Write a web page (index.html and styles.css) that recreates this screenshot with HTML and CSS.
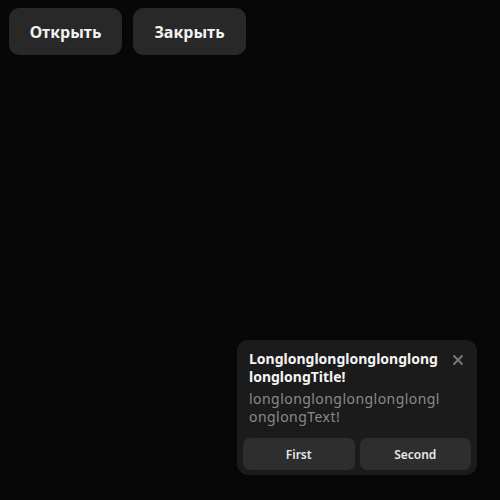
FILE: index.html
```html
<!DOCTYPE html>
<html>
<head>
<meta charset="utf-8">
<link rel="stylesheet" href="styles.css">
</head>
<body>
<div class="toolbar">
  <button class="btn">Открыть</button>
  <button class="btn">Закрыть</button>
</div>
<div class="toast">
  <div class="toast-head">
    <div class="toast-texts">
      <div class="toast-title">LonglonglonglonglonglonglonglongTitle!</div>
      <div class="toast-body">longlonglonglonglonglonglonglongText!</div>
    </div>
    <button class="close" aria-label="close">
      <svg width="12" height="12" viewBox="0 0 12 12"><path d="M2 2 L10 10 M10 2 L2 10" stroke="#7a7a7a" stroke-width="1.8" stroke-linecap="round"/></svg>
    </button>
  </div>
  <div class="toast-actions">
    <button class="act">First</button>
    <button class="act">Second</button>
  </div>
</div>
</body>
</html>
```
FILE: styles.css
```css
html, body {
  margin: 0;
  padding: 0;
  background: #070707;
  width: 500px;
  height: 500px;
  overflow: hidden;
  font-family: "Noto Sans", "DejaVu Sans", sans-serif;
}
body {
  position: relative;
}
.toolbar {
  display: flex;
  gap: 11px;
  padding: 8px 0 0 9px;
}
.btn {
  width: 113px;
  height: 47px;
  border: none;
  border-radius: 10px;
  background: #282828;
  color: #f2f2f2;
  font-family: inherit;
  font-size: 16px;
  font-weight: bold;
  padding: 0;
}
.toast {
  position: absolute;
  left: 237px;
  top: 340px;
  width: 240px;
  height: 135px;
  box-sizing: border-box;
  background: #1b1b1b;
  border-radius: 11px;
  padding: 10px 6px 5px 6px;
  display: flex;
  flex-direction: column;
}
.toast-head {
  display: flex;
  padding-left: 6px;
}
.toast-texts {
  width: 192px;
  word-break: break-all;
}
.toast-title {
  color: #f4f4f4;
  font-size: 14px;
  font-weight: bold;
  line-height: 18px;
}
.toast-body {
  color: #8a8a8a;
  font-size: 14px;
  line-height: 18px;
  letter-spacing: 0.45px;
  margin-top: 4px;
}
.close {
  background: none;
  border: none;
  padding: 0;
  width: 24px;
  height: 20px;
  margin-left: 5px;
  margin-top: 0;
  display: flex;
  align-items: center;
  justify-content: center;
}
.toast-actions {
  margin-top: auto;
  display: flex;
  gap: 5px;
}
.act {
  flex: 1;
  height: 32px;
  border: none;
  border-radius: 7px;
  background: #2e2e2e;
  color: #e8e8e8;
  font-family: inherit;
  font-size: 12px;
  font-weight: 600;
  padding: 0;
}
```
